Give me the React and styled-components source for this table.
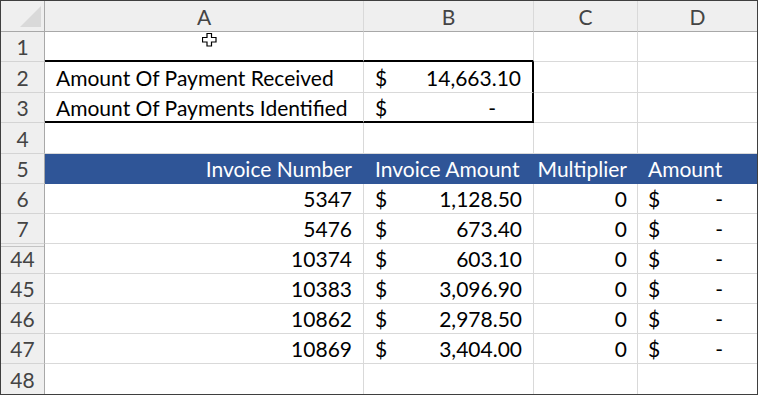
import React from "react";
import styled, { createGlobalStyle, css } from "styled-components";

const GlobalStyle = createGlobalStyle`
  html, body {
    margin: 0;
    padding: 0;
    background: #ffffff;
  }
  body {
    font-family: Lato, "Liberation Sans", sans-serif;
  }
`;

const BLUE = "#2f5597";
const GRID = "#d9d9d9";
const HEAD_BG = "#efefef";

const Frame = styled.div`
  position: relative;
  width: 756px;
  border: 1px solid #3f3f3f;
  background: #ffffff;
`;

const Sheet = styled.div`
  display: grid;
  grid-template-columns: 44px 319px 170px 104px 119px;
  grid-template-rows: ${(p) => p.$rows};
  font-size: 21px;
  color: #000;
`;

const Corner = styled.div`
  background: ${HEAD_BG};
  border-right: 1px solid #a8a8a8;
  border-bottom: 1px solid #a8a8a8;
  display: flex;
  justify-content: flex-end;
  align-items: flex-end;
  padding: 0 3px 4px 0;
  box-sizing: border-box;
`;

const Triangle = styled.div`
  width: 21px;
  height: 21px;
  background: #d9d9d9;
  clip-path: polygon(100% 0, 100% 100%, 0 100%);
`;

const ColHead = styled.div`
  background: ${HEAD_BG};
  border-bottom: 1px solid #a8a8a8;
  border-right: ${(p) => (p.$last ? "none" : `1px solid ${GRID}`)};
  color: #444;
  display: flex;
  align-items: center;
  justify-content: center;
  box-sizing: border-box;
`;

const RowHead = styled.div`
  background: ${HEAD_BG};
  border-right: 1px solid #a8a8a8;
  border-bottom: ${(p) => (p.$last ? "none" : `1px solid #d4d4d4`)};
  color: #444;
  display: flex;
  align-items: center;
  justify-content: center;
  box-sizing: border-box;
  ${(p) =>
    p.$hiddenAbove &&
    css`
      box-shadow: inset 0 2px 0 ${HEAD_BG}, inset 0 3px 0 #c4c4c4;
    `}
`;

const Cell = styled.div`
  box-sizing: border-box;
  display: flex;
  align-items: center;
  justify-content: ${(p) => (p.$align === "right" ? "flex-end" : "flex-start")};
  padding: 0 ${(p) => p.$pad || 10}px;
  white-space: nowrap;
  border-right: ${(p) =>
    p.$thickRight ? "2px solid #000" : p.$last ? "none" : `1px solid ${GRID}`};
  border-bottom: ${(p) =>
    p.$thickBottom ? "2px solid #000" : p.$lastRow ? "none" : `1px solid ${GRID}`};
  ${(p) =>
    p.$band &&
    css`
      background: ${BLUE};
      color: #ffffff;
      border-right-color: ${BLUE};
      border-bottom-color: ${BLUE};
    `}
`;

const Money = styled.div`
  flex: 1;
  display: flex;
  justify-content: space-between;
  align-items: center;
`;

const Dash = styled.span`
  margin-right: ${(p) => p.$gap}px;
`;

const Cursor = styled.svg`
  position: absolute;
  left: 201px;
  top: 32px;
`;

const Accounting = ({ value, gap }) => (
  <Money>
    <span>$</span>
    {value === "-" ? <Dash $gap={gap}>-</Dash> : <span>{value}</span>}
  </Money>
);

const invoices = [
  { n: 6, num: "5347", amt: "1,128.50" },
  { n: 7, num: "5476", amt: "673.40" },
  { n: 44, num: "10374", amt: "603.10", hidden: true },
  { n: 45, num: "10383", amt: "3,096.90" },
  { n: 46, num: "10862", amt: "2,978.50" },
  { n: 47, num: "10869", amt: "3,404.00" },
];

const heights = [31, 30, 31, 30, 31, 30, 30, 30, 30, 30, 30, 30, 30];

const App = () => {
  return (
    <>
      <GlobalStyle />
      <Frame>
        <Sheet $rows={heights.map((h) => `${h}px`).join(" ")}>
          <Corner>
            <Triangle />
          </Corner>
          <ColHead>A</ColHead>
          <ColHead>B</ColHead>
          <ColHead>C</ColHead>
          <ColHead $last>D</ColHead>

          <RowHead>1</RowHead>
          <Cell $thickBottom />
          <Cell $thickBottom />
          <Cell />
          <Cell $last />

          <RowHead>2</RowHead>
          <Cell $pad={11}>Amount Of Payment Received</Cell>
          <Cell $pad={11} $thickRight>
            <Accounting value="14,663.10" />
          </Cell>
          <Cell />
          <Cell $last />

          <RowHead>3</RowHead>
          <Cell $pad={11} $thickBottom>
            Amount Of Payments Identified
          </Cell>
          <Cell $pad={11} $thickBottom $thickRight>
            <Accounting value="-" gap={25} />
          </Cell>
          <Cell />
          <Cell $last />

          <RowHead>4</RowHead>
          <Cell />
          <Cell />
          <Cell />
          <Cell $last />

          <RowHead>5</RowHead>
          <Cell $band $align="right" $pad={11}>
            Invoice Number
          </Cell>
          <Cell $band $pad={11}>
            Invoice Amount
          </Cell>
          <Cell $band $align="right">
            Multiplier
          </Cell>
          <Cell $band $last>
            Amount
          </Cell>

          {invoices.map((r) => (
            <React.Fragment key={r.n}>
              <RowHead $hiddenAbove={r.hidden}>{r.n}</RowHead>
              <Cell $align="right" $pad={11}>
                {r.num}
              </Cell>
              <Cell $pad={11}>
                <Accounting value={r.amt} />
              </Cell>
              <Cell $align="right">0</Cell>
              <Cell $last>
                <Accounting value="-" gap={24} />
              </Cell>
            </React.Fragment>
          ))}

          <RowHead $last>48</RowHead>
          <Cell $lastRow />
          <Cell $lastRow />
          <Cell $lastRow />
          <Cell $lastRow $last />
        </Sheet>
        <Cursor width="15" height="14" viewBox="0 0 15 14">
          <path
            d="M5 0.5 H9.5 V4.5 H14 V9 H9.5 V13 H5 V9 H0.5 V4.5 H5 Z"
            fill="#fff"
            stroke="#000"
            strokeWidth="1.2"
          />
        </Cursor>
      </Frame>
    </>
  );
};

export default App;
